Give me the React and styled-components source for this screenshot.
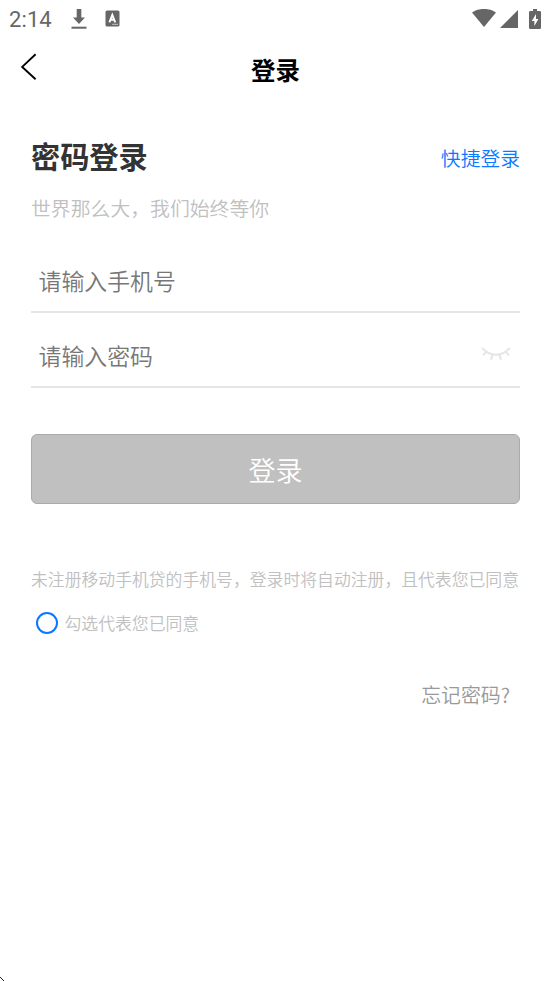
import React, { useState } from 'react';
import styled, { createGlobalStyle } from 'styled-components';

const GlobalStyle = createGlobalStyle`
  * {
    box-sizing: border-box;
  }

  body {
    margin: 0;
    background: #fff;
    font-family: 'Noto Sans CJK SC', sans-serif;
    font-weight: 350;
  }
`;

const Page = styled.div`
  position: relative;
  height: 981px;
  overflow: hidden;
  background: #fff;
`;

const StatusBar = styled.div`
  display: flex;
  align-items: center;
  height: 37px;
  padding: 0 10px 0 9px;
  color: #666;

  svg {
    display: block;
    flex: none;
  }
`;

const Clock = styled.span`
  width: 62px;
  font-family: Roboto, sans-serif;
  font-size: 22px;
  font-weight: 400;
  line-height: 37px;
  letter-spacing: 0.1px;
  padding-top: 2px;
`;

const StatusIcons = styled.div`
  display: flex;
  align-items: center;
  gap: ${(props) => props.$gap};
  margin-left: ${(props) => (props.$right ? 'auto' : '0')};
`;

const NavBar = styled.header`
  display: grid;
  grid-template-columns: 60px 1fr 60px;
  height: 66px;
`;

const BackButton = styled.button`
  display: flex;
  padding: 16px 0 0 20px;
  border: none;
  background: none;
`;

const NavTitle = styled.h1`
  margin: 0;
  color: #000;
  font-size: 24.5px;
  font-weight: 700;
  line-height: 66px;
  text-align: center;
`;

const Content = styled.main`
  padding: 30px 31px 0;
`;

const HeadingRow = styled.div`
  display: flex;
  align-items: center;
  justify-content: space-between;
  height: 46px;
`;

const Heading = styled.h2`
  margin: 0;
  color: #333;
  font-size: 29.2px;
  font-weight: 700;
  line-height: 44px;
  padding-bottom: 2px;
`;

const QuickLink = styled.a`
  color: #0a78ff;
  font-size: 19.8px;
  line-height: 44px;
  padding-top: 4px;
`;

const Slogan = styled.p`
  margin: 14px 0 0;
  color: #c0c0c0;
  font-size: 19.85px;
  line-height: 30px;
`;

const Field = styled.label`
  display: flex;
  align-items: center;
  height: 75px;
  padding: 11px 9px 0 7.5px;
  border-bottom: 2px solid #e5e5e5;

  svg {
    margin-top: -2px;
  }
`;

const Fields = styled.div`
  margin-top: 15px;
`;

const Input = styled.input`
  flex: 1;
  min-width: 0;
  height: 40px;
  padding: 0;
  border: none;
  outline: none;
  background: none;
  font-family: inherit;
  font-size: 22.9px;
  font-weight: inherit;

  &::placeholder {
    color: #777;
    opacity: 1;
  }
`;

const SubmitButton = styled.button`
  display: block;
  width: 100%;
  height: 70px;
  margin: 46px 0 0;
  padding: 0;
  border: 1px solid #aaa;
  border-radius: 6px;
  background: #c0c0c0;
  color: #fff;
  font-family: inherit;
  font-size: 27px;
  font-weight: inherit;
`;

const Notice = styled.p`
  margin: 60px 0 0;
  color: #c0c0c0;
  font-size: 16.83px;
  line-height: 30px;
  white-space: nowrap;
`;

const Agreement = styled.div`
  display: flex;
  align-items: center;
  height: 30px;
  margin-top: 14px;
  padding-left: 5px;
  gap: 6.5px;
  color: #c0c0c0;
  font-size: 16.83px;
  line-height: 28px;
`;

const Radio = styled.span`
  width: 22px;
  height: 22px;
  border: 2px solid #0a78ff;
  border-radius: 50%;
`;

const Forgot = styled.a`
  display: block;
  margin-top: 42px;
  padding-right: 10px;
  color: #999;
  font-size: 19.9px;
  line-height: 30px;
  text-align: right;
`;

const CornerMark = styled.svg`
  position: absolute;
  left: 0;
  bottom: 0;
`;

const DownloadIcon = () => (
  <svg width="16" height="22" viewBox="0 0 16 22">
    <path d="M5.7 1h4.6v8.5H14L8 16 2 9.5h3.7z" fill="#666" />
    <path d="M0.5 18.7h15v2H0.5z" fill="#666" />
  </svg>
);

const KeyboardIcon = () => (
  <svg width="15" height="17" viewBox="0 0 15 17">
    <rect x="0.5" y="0.5" width="14" height="16" rx="1.6" fill="#666" />
    <path d="M4.4 12.3 7.3 4.8l2.9 7.5M5.3 9.8h4" fill="none" stroke="#fff" strokeWidth="1.9" />
    <path d="M7.5 14.3h1.2M9.5 14.3h1.2M11.5 14.3h1.2" stroke="#fff" strokeWidth="1" />
  </svg>
);

const WifiIcon = () => (
  <svg width="24" height="20" viewBox="0 0 24 20">
    <path d="M0 3.5C6.8-1.3 17.2-1.3 24 3.5L12 18z" fill="#666" />
  </svg>
);

const SignalIcon = () => (
  <svg width="18" height="18" viewBox="0 0 18 18">
    <path d="M18 0v18H0z" fill="#666" />
  </svg>
);

const BatteryIcon = () => (
  <svg width="12" height="20" viewBox="0 0 12 20">
    <path d="M4 0h4v2h2.8Q12 2 12 3.2v15.6q0 1.2-1.2 1.2H1.2Q0 20 0 18.8V3.2Q0 2 1.2 2H4z" fill="#666" />
    <path d="M7 5v5h2.4L5.4 17v-5H2.8z" fill="#fff" />
  </svg>
);

const BackIcon = () => (
  <svg width="18" height="28" viewBox="0 0 18 28">
    <path d="M15.6 1.3 2.2 13.9 15.6 26.2" fill="none" stroke="#000" strokeWidth="1.9" />
  </svg>
);

const ClosedEyeIcon = () => (
  <svg width="30" height="16" viewBox="0 0 30 16">
    <path
      d="M1.3 1.8C8.5 11 21.5 11 28.7 1.8M5.2 5.8 2 9.3M24.8 5.8 28 9.3M11.3 9.2 10.1 13.8M18.7 9.2 19.9 13.8"
      fill="none"
      stroke="#e5e5e5"
      strokeWidth="2"
    />
  </svg>
);

const App = () => {
  const [phone, setPhone] = useState('');
  const [password, setPassword] = useState('');

  return (
    <Page>
      <GlobalStyle />
      <StatusBar>
        <Clock>2:14</Clock>
        <StatusIcons $gap="18px">
          <DownloadIcon />
          <KeyboardIcon />
        </StatusIcons>
        <StatusIcons $right $gap="11px">
          <StatusIcons $gap="4px">
            <WifiIcon />
            <SignalIcon />
          </StatusIcons>
          <BatteryIcon />
        </StatusIcons>
      </StatusBar>
      <NavBar>
        <BackButton type="button">
          <BackIcon />
        </BackButton>
        <NavTitle>登录</NavTitle>
      </NavBar>
      <Content>
        <HeadingRow>
          <Heading>密码登录</Heading>
          <QuickLink>快捷登录</QuickLink>
        </HeadingRow>
        <Slogan>世界那么大，我们始终等你</Slogan>
        <Fields>
          <Field>
            <Input
              type="tel"
              placeholder="请输入手机号"
              value={phone}
              onChange={(e) => setPhone(e.target.value)}
            />
          </Field>
          <Field>
            <Input
              type="password"
              placeholder="请输入密码"
              value={password}
              onChange={(e) => setPassword(e.target.value)}
            />
            <ClosedEyeIcon />
          </Field>
        </Fields>
        <SubmitButton type="button">登录</SubmitButton>
        <Notice>未注册移动手机贷的手机号，登录时将自动注册，且代表您已同意</Notice>
        <Agreement>
          <Radio />
          勾选代表您已同意
        </Agreement>
        <Forgot>忘记密码?</Forgot>
      </Content>
      <CornerMark width="5" height="5" viewBox="0 0 5 5" shapeRendering="crispEdges">
        <path d="M0 1h1v1H0zM1 2h1v1H1zM2 3h1v1H2zM3 4h1v1H3z" fill="#222" />
      </CornerMark>
    </Page>
  );
};

export default App;
